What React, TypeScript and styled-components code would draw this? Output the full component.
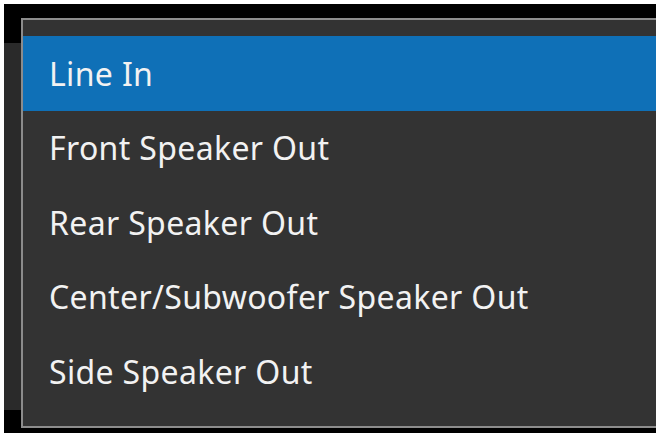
import { createGlobalStyle, styled } from 'styled-components';

const OPTIONS = [
  'Line In',
  'Front Speaker Out',
  'Rear Speaker Out',
  'Center/Subwoofer Speaker Out',
  'Side Speaker Out',
];

const SELECTED = 0;

const GlobalStyle = createGlobalStyle`
  html, body {
    margin: 0;
    padding: 0;
    background: #ffffff;
  }
`;

const App = () => {
  return (
    <>
      <GlobalStyle />
      <S.Page>
        <S.Screen>
          <S.Backdrop />
          <S.Menu role="listbox">
            {OPTIONS.map((label, index) => (
              <S.Item key={label} role="option" aria-selected={index === SELECTED} $selected={index === SELECTED}>
                {label}
              </S.Item>
            ))}
          </S.Menu>
        </S.Screen>
      </S.Page>
    </>
  );
};

const S = {
  Page: styled.div`
    width: 660px;
    height: 439px;
    padding: 4px 4px 6px;
    box-sizing: border-box;
    background: #ffffff;
  `,

  Screen: styled.div`
    display: flex;
    align-items: flex-start;
    height: 429px;
    padding-top: 14px;
    box-sizing: border-box;
    background: #000000;
    overflow: hidden;
  `,

  Backdrop: styled.div`
    flex: 0 0 17px;
    height: 367px;
    margin-top: 25px;
    background: #2a2a2a;
  `,

  Menu: styled.ul`
    flex: 1;
    margin: 0;
    padding: 16px 0 17.5px;
    list-style: none;
    background: #333333;
    border: 2px solid #8c8c8c;
    border-right: none;
  `,

  Item: styled.li<{ $selected: boolean }>`
    display: flex;
    align-items: center;
    height: 74.5px;
    padding-left: 26px;
    font-family: 'Noto Sans', 'Open Sans', sans-serif;
    font-size: 32px;
    letter-spacing: 0.35px;
    color: #f2f2f2;
    background: ${({ $selected }) => ($selected ? '#0f70b7' : 'transparent')};
    white-space: nowrap;
  `,
};

export default App;
